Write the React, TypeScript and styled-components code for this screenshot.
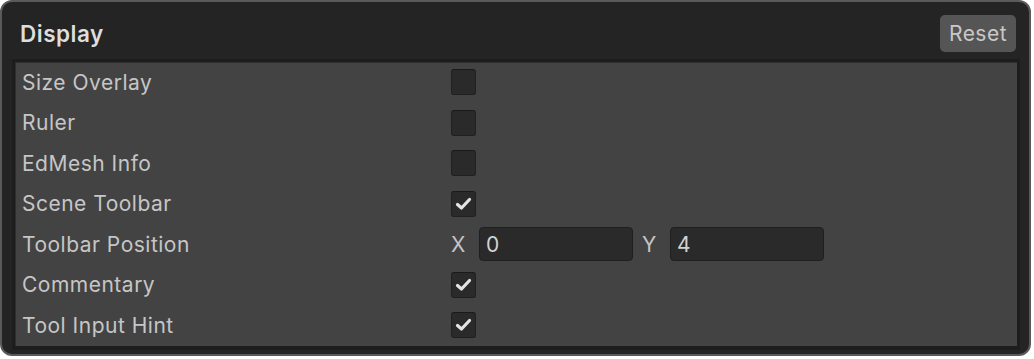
import React from 'react';
import styled, { createGlobalStyle } from 'styled-components';

const GlobalStyle = createGlobalStyle`
  body {
    margin: 0;
    background: #ffffff;
    font-family: Inter, 'Noto Sans', sans-serif;
  }
`;

const Frame = styled.div`
  box-sizing: border-box;
  width: 1031px;
  height: 356px;
  border: 2px solid #5a5a5a;
  border-radius: 12px;
  background: #242424;
  display: flex;
  flex-direction: column;
`;

const Header = styled.div`
  box-sizing: border-box;
  height: 57px;
  padding: 5px 13px 0 18px;
  display: flex;
  align-items: center;
  justify-content: space-between;
`;

const Title = styled.h2`
  margin: 0;
  font-size: 22.5px;
  font-weight: 600;
  letter-spacing: 0.5px;
  color: #dedede;
`;

const ResetButton = styled.button`
  width: 76px;
  height: 37px;
  border: none;
  border-radius: 5px;
  background: #555555;
  color: #c8c8c8;
  font-family: Inter, sans-serif;
  font-size: 21px;
  letter-spacing: 0.5px;
  padding: 0;
`;

const Panel = styled.div`
  margin: 0 9px 0 10px;
  border: 3px solid #1d1d1d;
  border-bottom-width: 4px;
  background: #434343;
  box-shadow: inset 1px 1px 0 #2e2e2e;
`;

const Row = styled.div`
  height: 40.5px;
  display: grid;
  grid-template-columns: 436px 1fr;
  align-items: center;
`;

const Label = styled.span`
  padding-left: 7px;
  font-size: 21px;
  color: #c6c6c6;
  letter-spacing: 0.5px;
`;

const Box = styled.div`
  box-sizing: border-box;
  width: 25px;
  height: 26px;
  border-radius: 3px;
  background: #2a2a2a;
  border: 1px solid #202020;
  border-top-color: #1a1a1a;
  display: flex;
  align-items: center;
  justify-content: center;
`;

const Pair = styled.div`
  display: flex;
  align-items: center;
`;

const Axis = styled.span`
  width: 28px;
  font-size: 21px;
  color: #c4c4c4;
`;

const NumberField = styled.div`
  box-sizing: border-box;
  width: 154px;
  height: 34px;
  margin-right: 9px;
  border: 1px solid #1f1f1f;
  border-radius: 4px;
  background: #2a2a2a;
  color: #d2d2d2;
  font-size: 21px;
  display: flex;
  align-items: center;
  padding-left: 6px;
`;

const Check = ({ on }: { on?: boolean }) => (
  <Box>
    {on && (
      <svg width="17" height="14" viewBox="0 0 17 14">
        <path d="M2.5 7.5 L6.5 11 L14.5 2.5" fill="none" stroke="#e4e4e4" strokeWidth="3.2" strokeLinecap="round" strokeLinejoin="round" />
      </svg>
    )}
  </Box>
);

const rows: { label: string; on: boolean }[] = [
  { label: 'Size Overlay', on: false },
  { label: 'Ruler', on: false },
  { label: 'EdMesh Info', on: false },
  { label: 'Scene Toolbar', on: true },
];

const App = () => {
  return (
    <>
      <GlobalStyle />
      <Frame>
        <Header>
          <Title>Display</Title>
          <ResetButton>Reset</ResetButton>
        </Header>
        <Panel>
          {rows.map((r) => (
            <Row key={r.label}>
              <Label>{r.label}</Label>
              <Check on={r.on} />
            </Row>
          ))}
          <Row>
            <Label>Toolbar Position</Label>
            <Pair>
              <Axis>X</Axis>
              <NumberField>0</NumberField>
              <Axis>Y</Axis>
              <NumberField>4</NumberField>
            </Pair>
          </Row>
          <Row>
            <Label>Commentary</Label>
            <Check on />
          </Row>
          <Row>
            <Label>Tool Input Hint</Label>
            <Check on />
          </Row>
        </Panel>
      </Frame>
    </>
  );
};

export default App;
